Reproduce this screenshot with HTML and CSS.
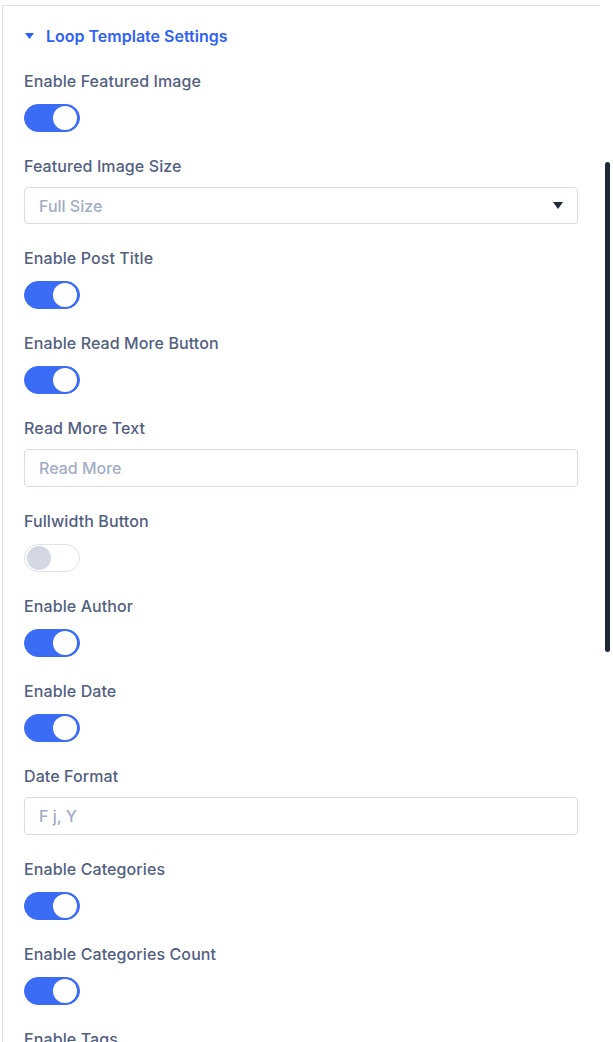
FILE: index.html
```html
<!DOCTYPE html>
<html lang="en">
<head>
<meta charset="utf-8">
<title>Loop Template Settings</title>
<link rel="stylesheet" href="styles.css">
</head>
<body>
<div class="panel">
  <div class="section-head">
    <svg class="caret" width="9" height="6" viewBox="0 0 9 6"><path d="M0 0H9L4.5 6Z" fill="currentColor"/></svg>
    <span>Loop Template Settings</span>
  </div>
  <div class="fields">
    <div class="field">
      <div class="label">Enable Featured Image</div>
      <div class="toggle on"><span class="knob"></span></div>
    </div>
    <div class="field">
      <div class="label label-tight">Featured Image Size</div>
      <div class="select">
        <span class="placeholder">Full Size</span>
        <svg class="arrow" width="10" height="7" viewBox="0 0 10 7"><path d="M0 0H10L5 7Z" fill="currentColor"/></svg>
      </div>
    </div>
    <div class="field">
      <div class="label">Enable Post Title</div>
      <div class="toggle on"><span class="knob"></span></div>
    </div>
    <div class="field">
      <div class="label">Enable Read More Button</div>
      <div class="toggle on"><span class="knob"></span></div>
    </div>
    <div class="field">
      <div class="label label-input">Read More Text</div>
      <div class="input"><span class="placeholder">Read More</span></div>
    </div>
    <div class="field">
      <div class="label">Fullwidth Button</div>
      <div class="toggle"><span class="knob"></span></div>
    </div>
    <div class="field">
      <div class="label">Enable Author</div>
      <div class="toggle on"><span class="knob"></span></div>
    </div>
    <div class="field">
      <div class="label">Enable Date</div>
      <div class="toggle on"><span class="knob"></span></div>
    </div>
    <div class="field">
      <div class="label label-input">Date Format</div>
      <div class="input"><span class="placeholder">F j, Y</span></div>
    </div>
    <div class="field">
      <div class="label">Enable Categories</div>
      <div class="toggle on"><span class="knob"></span></div>
    </div>
    <div class="field">
      <div class="label">Enable Categories Count</div>
      <div class="toggle on"><span class="knob"></span></div>
    </div>
    <div class="field">
      <div class="label">Enable Tags</div>
      <div class="toggle on"><span class="knob"></span></div>
    </div>
  </div>
</div>
<div class="scrollbar"></div>
</body>
</html>
```
FILE: styles.css
```css
html, body {
  margin: 0;
  padding: 0;
  background: #ffffff;
  height: 100%;
  overflow: hidden;
}
body {
  font-family: "Inter", "Noto Sans", sans-serif;
  position: relative;
}
.panel {
  margin-top: 5px;
  margin-left: 2px;
  width: 598px;
  box-sizing: border-box;
  border-top: 1px solid #dde1ea;
  border-left: 1px solid #dde1ea;
  padding: 20px 22px 0 21px;
  min-height: 1100px;
}
.section-head {
  display: flex;
  align-items: center;
  height: 20px;
  color: #2f62f4;
  font-size: 16px;
  font-weight: 600;
  line-height: 20px;
  margin-bottom: 25px;
}
.caret {
  margin-left: 1px;
  margin-right: 12px;
  color: #2f62f4;
}
.fields {
  display: flex;
  flex-direction: column;
  gap: 24px;
}
.field {
  display: flex;
  flex-direction: column;
}
.label {
  font-size: 16px;
  line-height: 20px;
  font-weight: 500;
  color: #52607f;
  margin-bottom: 13px;
  letter-spacing: 0.1px;
}
.label-tight {
  margin-bottom: 11px;
}
.label-input {
  margin-bottom: 11px;
}
.toggle {
  width: 56px;
  height: 28px;
  box-sizing: border-box;
  border-radius: 14px;
  border: 1px solid #dde1ea;
  background: #ffffff;
  display: flex;
  align-items: center;
  padding: 0 2px;
}
.toggle .knob {
  width: 24px;
  height: 24px;
  border-radius: 50%;
  background: #d3d8e3;
}
.toggle.on {
  background: #3a6cf6;
  border-color: #3a6cf6;
  justify-content: flex-end;
}
.toggle.on .knob {
  background: #ffffff;
}
.select, .input {
  box-sizing: border-box;
  border: 1px solid #d6dbe6;
  border-radius: 4px;
  display: flex;
  align-items: center;
  padding: 0 14px;
  font-size: 16px;
  font-weight: 500;
}
.select {
  height: 37px;
  justify-content: space-between;
}
.input {
  height: 38px;
}
.placeholder {
  color: #a2adc6;
}
.arrow {
  color: #1f2937;
  margin-right: 0;
}
.scrollbar {
  position: absolute;
  left: 605px;
  top: 162px;
  width: 5px;
  height: 490px;
  border-radius: 3px;
  background: #1e2937;
}
```
